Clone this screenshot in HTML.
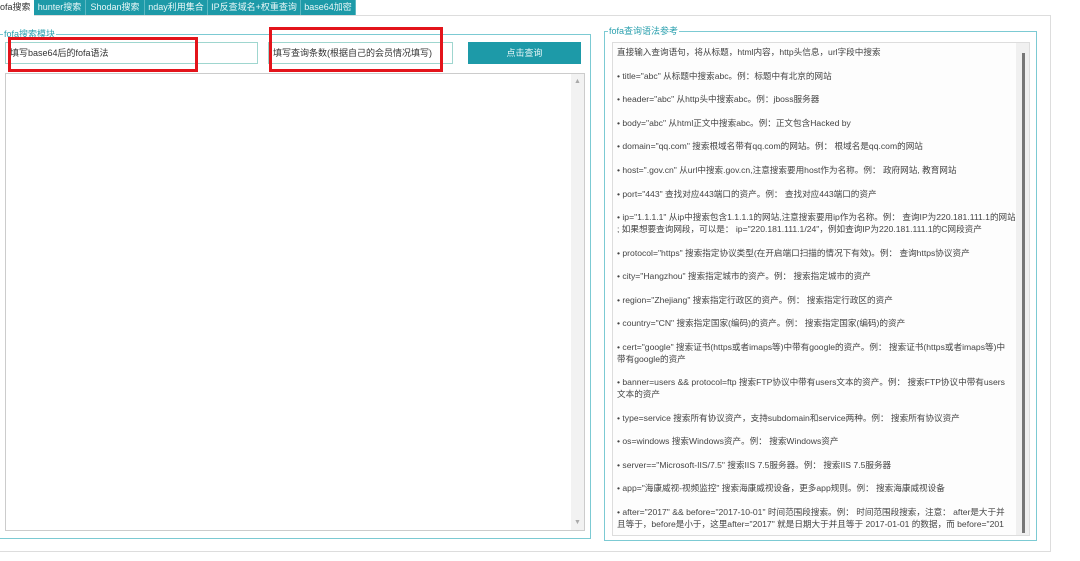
<!DOCTYPE html>
<html><head><meta charset="utf-8"><style>
*{box-sizing:border-box;margin:0;padding:0}
body{width:1080px;height:561px;background:#fff;font-family:"Liberation Sans","Noto Sans CJK SC",sans-serif;position:relative;overflow:hidden;color:#333}
.a{position:absolute}
.tab{position:absolute;top:0;height:15px;background:#1d9aa8;color:#e8f7f8;font-size:9px;line-height:15px;text-align:center;border-right:1px solid #5bb8c2}
.gb{position:absolute;border:1px solid #7ccad3}
.lg{position:absolute;top:-7px;background:#fff;color:#2aa0ae;font-size:9px;line-height:12px;padding:0 1px}
.inp{position:absolute;border:1px solid #9fd6cf;background:#fff;font-size:9px;line-height:20px;padding-left:4px;color:#333}
.red{position:absolute;border:3px solid #e3141b}
.txt p{font-size:8.6px;line-height:11.8px;color:#444;white-space:nowrap;margin-bottom:11.8px}
</style></head><body>
<div class="a" style="left:0;top:15px;width:1051px;height:537px;border:1px solid #ddd;border-left:none"></div>
<div class="a" style="left:0;top:0;width:34px;height:16px;background:#fff;font-size:9px;line-height:15px">ofa搜索</div>
<div class="tab" style="left:34px;width:52px">hunter搜索</div>
<div class="tab" style="left:86px;width:59px">Shodan搜索</div>
<div class="tab" style="left:145px;width:63px">nday利用集合</div>
<div class="tab" style="left:208px;width:93px">IP反查域名+权重查询</div>
<div class="tab" style="left:301px;width:55px">base64加密</div>

<div class="gb" style="left:-2px;top:34px;width:593px;height:505px"><div class="lg" style="left:4px">fofa搜索模块</div></div>
<div class="inp" style="left:5px;top:42px;width:253px;height:22px">填写base64后的fofa语法</div>
<div class="inp" style="left:268px;top:42px;width:185px;height:22px">填写查询条数(根据自己的会员情况填写)</div>
<div class="a" style="left:468px;top:42px;width:113px;height:22px;background:#1d9aa8;color:#e8f7f8;font-size:9px;line-height:22px;text-align:center">点击查询</div>
<div class="a" style="left:5px;top:73px;width:580px;height:458px;border:1px solid #ccc;background:#fff"></div>
<div class="a" style="left:571px;top:74px;width:13px;height:456px;background:#f2f2f2"></div>
<div class="a" style="left:574px;top:78px;font-size:7px;color:#aaa">▲</div>
<div class="a" style="left:574px;top:519px;font-size:7px;color:#aaa">▼</div>
<div class="red" style="left:8px;top:37px;width:190px;height:35px"></div>
<div class="red" style="left:269px;top:27px;width:174px;height:45px"></div>

<div class="gb" style="left:604px;top:31px;width:433px;height:510px"><div class="lg" style="left:3px">fofa查询语法参考</div></div>
<div class="a" style="left:612px;top:42px;width:418px;height:494px;border:1px solid #ddd;background:#fdfdfd"></div>
<div class="a" style="left:1016px;top:43px;width:13px;height:492px;background:#f0f0f0"></div>
<div class="a" style="left:1022px;top:53px;width:3px;height:480px;background:#777"></div>
<div class="a txt" style="left:617px;top:47px;width:398px;height:488px;overflow:hidden">
<p>直接输入查询语句，将从标题，html内容，http头信息，url字段中搜索</p>
<p>• title="abc" 从标题中搜索abc。例：标题中有北京的网站</p>
<p>• header="abc" 从http头中搜索abc。例：jboss服务器</p>
<p>• body="abc" 从html正文中搜索abc。例：正文包含Hacked by</p>
<p>• domain="qq.com" 搜索根域名带有qq.com的网站。例： 根域名是qq.com的网站</p>
<p>• host=".gov.cn" 从url中搜索.gov.cn,注意搜索要用host作为名称。例： 政府网站, 教育网站</p>
<p>• port="443" 查找对应443端口的资产。例： 查找对应443端口的资产</p>
<p style="margin-bottom:0">• ip="1.1.1.1" 从ip中搜索包含1.1.1.1的网站,注意搜索要用ip作为名称。例： 查询IP为220.181.111.1的网站</p>
<p>; 如果想要查询网段，可以是： ip="220.181.111.1/24"，例如查询IP为220.181.111.1的C网段资产</p>
<p>• protocol="https" 搜索指定协议类型(在开启端口扫描的情况下有效)。例： 查询https协议资产</p>
<p>• city="Hangzhou" 搜索指定城市的资产。例： 搜索指定城市的资产</p>
<p>• region="Zhejiang" 搜索指定行政区的资产。例： 搜索指定行政区的资产</p>
<p>• country="CN" 搜索指定国家(编码)的资产。例： 搜索指定国家(编码)的资产</p>
<p style="margin-bottom:0">• cert="google" 搜索证书(https或者imaps等)中带有google的资产。例： 搜索证书(https或者imaps等)中</p>
<p>带有google的资产</p>
<p style="margin-bottom:0">• banner=users &amp;&amp; protocol=ftp 搜索FTP协议中带有users文本的资产。例： 搜索FTP协议中带有users</p>
<p>文本的资产</p>
<p>• type=service 搜索所有协议资产，支持subdomain和service两种。例： 搜索所有协议资产</p>
<p>• os=windows 搜索Windows资产。例： 搜索Windows资产</p>
<p>• server=="Microsoft-IIS/7.5" 搜索IIS 7.5服务器。例： 搜索IIS 7.5服务器</p>
<p>• app="海康威视-视频监控" 搜索海康威视设备，更多app规则。例： 搜索海康威视设备</p>
<p style="margin-bottom:0">• after="2017" &amp;&amp; before="2017-10-01" 时间范围段搜索。例： 时间范围段搜索，注意： after是大于并</p>
<p>且等于，before是小于，这里after="2017" 就是日期大于并且等于 2017-01-01 的数据，而 before="201</p>
</div>
</body></html>
